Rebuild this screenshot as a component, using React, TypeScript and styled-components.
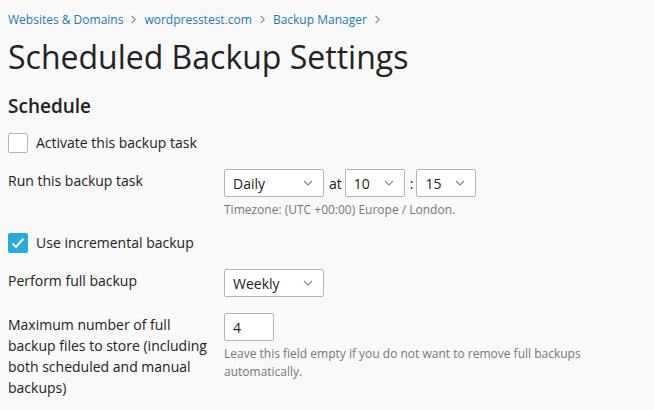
import * as React from 'react';
import styled, { createGlobalStyle } from 'styled-components';

const GlobalStyle = createGlobalStyle`
  html, body {
    margin: 0;
    padding: 0;
    background: #f9f9f9;
  }
  body {
    font-family: 'Open Sans', 'Noto Sans', sans-serif;
    color: #222;
  }
`;

const Page = styled.div`
  width: 654px;
  height: 410px;
  overflow: hidden;
  padding: 0 8px;
  box-sizing: border-box;
`;

const Breadcrumbs = styled.nav`
  display: flex;
  align-items: center;
  height: 20px;
  padding-top: 9px;
  font-size: 12px;
  color: #1a7bb0;
`;

const Crumb = styled.span`
  color: #1a7bb0;
`;

const Sep = styled.span`
  display: flex;
  align-items: center;
  margin: 0 8px;
`;

const Title = styled.h1`
  margin: 6px 0 0;
  font-size: 32px;
  font-weight: 400;
  line-height: 44px;
  color: #222;
`;

const SectionTitle = styled.h2`
  margin: 14px 0 0;
  font-size: 19px;
  font-weight: 600;
  line-height: 26px;
  color: #222;
`;

const CheckRow = styled.label<{ $top: number }>`
  display: flex;
  align-items: center;
  gap: 8px;
  margin-top: ${p => p.$top}px;
  font-size: 14px;
  line-height: 20px;
`;

const Box = styled.span<{ $checked?: boolean }>`
  width: 20px;
  height: 20px;
  box-sizing: border-box;
  border-radius: 2px;
  border: 1px solid ${p => (p.$checked ? '#28aade' : '#b5b5b5')};
  background: ${p => (p.$checked ? '#28aade' : '#fff')};
  display: flex;
  align-items: center;
  justify-content: center;
`;

const FieldRow = styled.div<{ $top: number }>`
  display: flex;
  margin-top: ${p => p.$top}px;
`;

const Label = styled.div`
  width: 216px;
  flex: none;
  font-size: 14px;
  line-height: 21px;
  padding-top: 1px;
  padding-right: 12px;
  box-sizing: border-box;
`;

const Controls = styled.div`
  display: flex;
  flex-direction: column;
`;

const Inline = styled.div`
  display: flex;
  align-items: center;
`;

const Select = styled.div<{ $w: number }>`
  width: ${p => p.$w}px;
  height: 28px;
  box-sizing: border-box;
  border: 1px solid #b5b5b5;
  border-radius: 2px;
  background: #fff;
  display: flex;
  align-items: center;
  justify-content: space-between;
  padding: 0 10px 0 8px;
  font-size: 14px;
  color: #222;
`;

const Chevron = () => (
  <svg width="10" height="6" viewBox="0 0 10 6" fill="none">
    <path d="M1 1l4 4 4-4" stroke="#888" strokeWidth="1.1" />
  </svg>
);

const CrumbArrow = () => (
  <svg width="5" height="9" viewBox="0 0 5 9" fill="none">
    <path d="M0.6 0.8l3.6 3.7-3.6 3.7" stroke="#8a8a8a" strokeWidth="1.1" />
  </svg>
);

const Joiner = styled.span<{ $gap: number }>`
  margin: 0 ${p => p.$gap}px 0 5px;
  font-size: 14px;
`;

const NumberInput = styled.div`
  width: 50px;
  height: 28px;
  box-sizing: border-box;
  border: 1px solid #b5b5b5;
  border-radius: 2px;
  background: #fff;
  display: flex;
  align-items: center;
  padding: 0 8px;
  font-size: 14px;
`;

const Hint = styled.div<{ $w?: number }>`
  margin-top: 4px;
  font-size: 12px;
  line-height: 18px;
  color: #777;
  max-width: ${p => p.$w ?? 400}px;
`;

const Dropdown = ({ value, width }: { value: string; width: number }) => (
  <Select $w={width}>
    <span>{value}</span>
    <Chevron />
  </Select>
);

const Check = () => (
  <svg width="14" height="12" viewBox="0 0 14 12" fill="none">
    <path d="M1.5 6.5l3.5 3.5 7.5-8.5" stroke="#fff" strokeWidth="2" />
  </svg>
);

export default function App() {
  return (
    <Page>
      <GlobalStyle />
      <Breadcrumbs>
        <Crumb>Websites &amp; Domains</Crumb>
        <Sep><CrumbArrow /></Sep>
        <Crumb>wordpresstest.com</Crumb>
        <Sep><CrumbArrow /></Sep>
        <Crumb>Backup Manager</Crumb>
        <Sep><CrumbArrow /></Sep>
      </Breadcrumbs>
      <Title>Scheduled Backup Settings</Title>
      <SectionTitle>Schedule</SectionTitle>
      <CheckRow $top={14}>
        <Box />
        Activate this backup task
      </CheckRow>
      <FieldRow $top={16}>
        <Label>Run this backup task</Label>
        <Controls>
          <Inline>
            <Dropdown value="Daily" width={100} />
            <Joiner $gap={3}>at</Joiner>
            <Dropdown value="10" width={60} />
            <Joiner $gap={3}>:</Joiner>
            <Dropdown value="15" width={60} />
          </Inline>
          <Hint>Timezone: (UTC +00:00) Europe / London.</Hint>
        </Controls>
      </FieldRow>
      <CheckRow $top={14}>
        <Box $checked>
          <Check />
        </Box>
        Use incremental backup
      </CheckRow>
      <FieldRow $top={16}>
        <Label>Perform full backup</Label>
        <Controls>
          <Dropdown value="Weekly" width={100} />
        </Controls>
      </FieldRow>
      <FieldRow $top={16}>
        <Label>Maximum number of full backup files to store (including both scheduled and manual backups)</Label>
        <Controls>
          <NumberInput>4</NumberInput>
          <Hint $w={380}>Leave this field empty if you do not want to remove full backups automatically.</Hint>
        </Controls>
      </FieldRow>
    </Page>
  );
}
